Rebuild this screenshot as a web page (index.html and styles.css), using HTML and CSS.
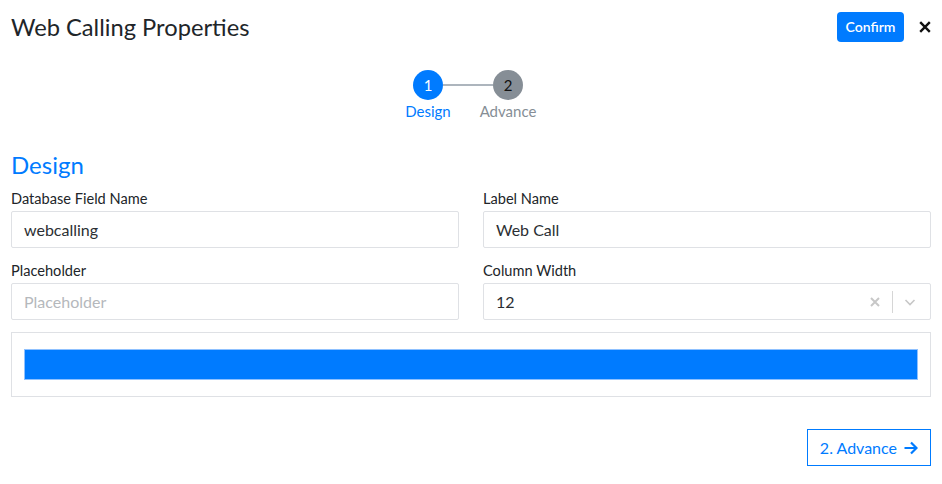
FILE: index.html
```html
<!DOCTYPE html>
<html lang="en">
<head>
<meta charset="utf-8">
<title>Web Calling Properties</title>
<link rel="stylesheet" href="styles.css">
</head>
<body>
<div class="modal">
  <header class="modal-header">
    <h1 class="modal-title">Web Calling Properties</h1>
    <div class="header-actions">
      <button class="btn-confirm" type="button">Confirm</button>
      <button class="btn-close" type="button" aria-label="Close">
        <svg width="12" height="12" viewBox="0 0 12 12"><path d="M1.2 1.2 L10.8 10.8 M10.8 1.2 L1.2 10.8" stroke="#111" stroke-width="2.4" stroke-linecap="butt"/></svg>
      </button>
    </div>
  </header>

  <nav class="stepper">
    <div class="step active">
      <div class="step-dot">1</div>
      <div class="step-label">Design</div>
    </div>
    <div class="step-line"></div>
    <div class="step">
      <div class="step-dot">2</div>
      <div class="step-label">Advance</div>
    </div>
  </nav>

  <section class="design">
    <h2 class="section-title">Design</h2>
    <div class="form-grid">
      <div class="field">
        <label class="field-label">Database Field Name</label>
        <div class="input">webcalling</div>
      </div>
      <div class="field">
        <label class="field-label">Label Name</label>
        <div class="input">Web Call</div>
      </div>
      <div class="field">
        <label class="field-label">Placeholder</label>
        <div class="input placeholder">Placeholder</div>
      </div>
      <div class="field">
        <label class="field-label">Column Width</label>
        <div class="input select">
          <span class="select-value">12</span>
          <span class="select-indicators">
            <svg class="clear-icon" width="14" height="14" viewBox="0 0 14 14"><path d="M3 3 L11 11 M11 3 L3 11" stroke="#c7c7c7" stroke-width="2"/></svg>
            <span class="select-sep"></span>
            <svg class="chevron-icon" width="14" height="14" viewBox="0 0 14 14"><path d="M2.5 5 L7 9.5 L11.5 5" fill="none" stroke="#c7c7c7" stroke-width="1.6"/></svg>
          </span>
        </div>
      </div>
    </div>

    <div class="preview">
      <div class="preview-bar"></div>
    </div>
  </section>

  <footer class="modal-footer">
    <button class="btn-next" type="button">2. Advance
      <svg width="14" height="14" viewBox="0 0 14 14"><path d="M0.5 7 H12.5 M7 1.5 L12.5 7 L7 12.5" fill="none" stroke="#007bff" stroke-width="2.2"/></svg>
    </button>
  </footer>
</div>
</body>
</html>
```

FILE: styles.css
```css
* { box-sizing: border-box; }

body {
  margin: 0;
  background: #fff;
  font-family: "Lato", "Open Sans", sans-serif;
  color: #212529;
}

.modal {
  width: 942px;
  padding: 12px 11px 0 11px;
}

.modal-header {
  display: flex;
  align-items: center;
  justify-content: space-between;
  height: 30px;
}

.modal-title {
  margin: 0;
  font-size: 23.7px;
  font-weight: 400;
  line-height: 30px;
  color: #212529;
}

.header-actions {
  display: flex;
  align-items: center;
  gap: 15px;
}

.btn-confirm {
  width: 67px;
  height: 30px;
  padding: 0;
  border: none;
  border-radius: 4px;
  background: #007bff;
  color: #fff;
  font-family: inherit;
  font-size: 14px;
  font-weight: 600;
  line-height: 30px;
  text-align: center;
}

.btn-close {
  display: flex;
  padding: 0;
  border: none;
  background: none;
}

.stepper {
  display: flex;
  justify-content: center;
  align-items: flex-start;
  margin-top: 28px;
  padding-right: 6px;
}

.step {
  display: flex;
  flex-direction: column;
  align-items: center;
  width: 30px;
}

.step-dot {
  width: 30px;
  height: 30px;
  border-radius: 50%;
  background: #868e96;
  color: #111;
  font-size: 15px;
  line-height: 30px;
  text-align: center;
}

.step.active .step-dot {
  background: #007bff;
  color: #fff;
}

.step-label {
  margin-top: 2px;
  white-space: nowrap;
  font-size: 15px;
  line-height: 18px;
  color: #868e96;
}

.step.active .step-label { color: #007bff; }

.step-line {
  width: 50px;
  height: 2px;
  margin-top: 14px;
  background: #adb5bd;
}

.design { margin-top: 30px; }

.section-title {
  margin: 0 0 11px 0;
  font-size: 24px;
  font-weight: 400;
  line-height: 29px;
  color: #007bff;
}

.form-grid {
  display: grid;
  grid-template-columns: 1fr 1fr;
  column-gap: 24px;
  row-gap: 14px;
}

.field {
  display: flex;
  flex-direction: column;
  gap: 4px;
}

.field-label {
  font-size: 14.6px;
  line-height: 17px;
  color: #212529;
}

.input {
  display: flex;
  align-items: center;
  height: 37px;
  padding: 0 12px;
  border: 1px solid #dfe1e5;
  border-radius: 2px;
  font-size: 16px;
  color: #2b2f33;
}

.input.placeholder { color: #b5b8bc; }

.select { justify-content: space-between; padding-right: 13px; }

.select-indicators {
  display: flex;
  align-items: center;
  gap: 4px;
}

.select-sep {
  width: 1px;
  height: 22px;
  background: #d6d6d6;
  margin: 0 6px;
}

.preview {
  margin-top: 12px;
  height: 65px;
  padding: 16px 12px;
  border: 1px solid #dfe1e5;
}

.preview-bar {
  height: 31px;
  background: #007bff;
  border: 1px solid #8fc1ff;
}

.modal-footer {
  display: flex;
  justify-content: flex-end;
  margin-top: 32px;
}

.btn-next {
  display: flex;
  align-items: center;
  gap: 7px;
  height: 37px;
  padding: 0 12px;
  border: 1px solid #007bff;
  border-radius: 0;
  background: #fff;
  color: #007bff;
  font-family: inherit;
  font-size: 16px;
}
```
